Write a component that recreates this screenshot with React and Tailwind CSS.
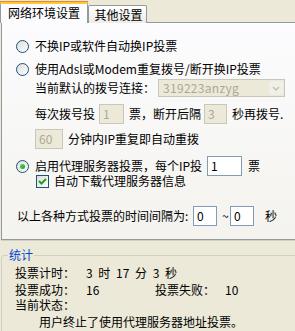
import React from "react";

const font = { fontFamily: '"Noto Sans CJK SC", "Noto Sans", sans-serif' };

function Radio({ checked }) {
  return (
    <span className="relative inline-flex h-[13px] w-[13px] shrink-0 items-center justify-center rounded-full border border-[#1C5180] bg-gradient-to-br from-[#DCDCD7] to-white">
      {checked && (
        <span className="h-[5px] w-[5px] rounded-full bg-gradient-to-br from-[#55D551] to-[#21A121]" />
      )}
    </span>
  );
}

function Checkbox() {
  return (
    <span className="inline-flex h-[13px] w-[13px] shrink-0 items-center justify-center border border-[#1C5180] bg-gradient-to-br from-[#DCDCD7] to-white">
      <svg width="9" height="9" viewBox="0 0 9 9">
        <path d="M1 4 L3.5 6.5 L8 2" stroke="#21A121" strokeWidth="2" fill="none" />
      </svg>
    </span>
  );
}

function Box({ value, width, disabled }) {
  return (
    <span
      className={`inline-flex h-[20px] shrink-0 items-center border pl-[3px] text-[12px] leading-none ${
        disabled
          ? "border-[#C9C7BA] bg-[#ECE9D8] text-[#ACA899]"
          : "border-[#7F9DB9] bg-white text-black"
      } ${width}`}
    >
      {value}
    </span>
  );
}

export default function App() {
  return (
    <div
      className="relative h-[331px] w-[295px] overflow-hidden bg-[#ECE9D8] text-[12px] leading-none text-black"
      style={font}
    >
      {/* tabs */}
      <div className="flex h-[23px] items-end">
        <div className="relative z-10 flex h-[22px] w-[88px] items-center justify-center border-x border-[#919B9C] bg-[#FCFCFE] pb-[1px]">
          <div className="absolute -left-px -right-px top-0 h-[3px] rounded-t-[2px] bg-[#FFC83C] border-t border-[#E68B2C]" />
          <span className="mt-[2px]">网络环境设置</span>
        </div>
        <div className="flex h-[18px] w-[59px] items-center justify-center rounded-t-[2px] border-x border-t border-[#919B9C] bg-gradient-to-b from-white to-[#ECEBE6] pl-[2px]">
          其他设置
        </div>
      </div>

      {/* panel */}
      <div className="-mt-px ml-[1px] h-[218px] w-[300px] border border-[#919B9C] bg-gradient-to-b from-[#FCFCFE] to-[#F4F3EE] shadow-[0_1px_0_#D0CFC4]">
        <div className="mt-[13px] flex h-[20px] items-center gap-[6px] pl-[14px]">
          <Radio />
          <span>不换IP或软件自动换IP投票</span>
        </div>
        <div className="mt-[3px] flex h-[20px] items-center gap-[6px] pl-[14px]">
          <Radio />
          <span>使用Adsl或Modem重复拨号/断开换IP投票</span>
        </div>
        <div className="flex h-[18px] items-center pl-[33px]">
          <span className="w-[123px]">当前默认的拨号连接：</span>
          <span className="flex h-[18px] w-[127px] items-center justify-between border border-[#C9C7BA] bg-[#ECE9D8] pl-[4px] text-[#ACA899]">
            <span className="tracking-[0.3px]">319223anzyg</span>
            <span className="mr-px flex h-[14px] w-[14px] items-center justify-center rounded-[2px] bg-[#F0EFEA]">
              <svg width="8" height="5" viewBox="0 0 8 5">
                <path d="M1 1 L4 4 L7 1" stroke="#C5C2B2" strokeWidth="1.5" fill="none" />
              </svg>
            </span>
          </span>
        </div>
        <div className="mt-[7px] flex h-[20px] items-center pl-[33px]">
          <span className="w-[64px]">每次拨号投</span>
          <Box value="1" width="w-[25px]" disabled />
          <span className="ml-[5px] w-[75px]">票，断开后隔</span>
          <Box value="3" width="w-[23px]" disabled />
          <span className="ml-[5px]">秒再拨号.</span>
        </div>
        <div className="mt-[5px] flex h-[20px] items-center pl-[33px]">
          <Box value="60" width="w-[28px]" disabled />
          <span className="ml-[5px]">分钟内IP重复即自动重拨</span>
        </div>
        <div className="mt-[7px] flex h-[20px] items-center pl-[14px]">
          <Radio checked />
          <span className="ml-[6px] w-[172px]">启用代理服务器投票，每个IP投</span>
          <Box value="1" width="w-[35px]" />
          <span className="ml-[6px]">票</span>
        </div>
        <div className="-mt-[1px] flex h-[12px] items-center pl-[34px]">
          <Checkbox />
          <span className="ml-[5px]">自动下载代理服务器信息</span>
        </div>
        <div className="mt-[19px] flex h-[20px] items-center pl-[15px]">
          <span className="w-[176px]">以上各种方式投票的时间间隔为:</span>
          <Box value="0" width="w-[24px]" />
          <span className="ml-[5px] w-[8px]">~</span>
          <Box value="0" width="w-[24px]" />
          <span className="ml-[11px]">秒</span>
        </div>
      </div>

      {/* stats group */}
      <div className="relative ml-[1px] mt-[15px] h-[90px] w-[300px] rounded-[3px] border border-[#D0D0BF]">
        <span className="absolute -top-[7px] left-[6px] bg-[#ECE9D8] px-[1px] text-[#0046D5]">
          统计
        </span>
        <div className="ml-[13px] mt-[11px] flex h-[12px] items-center">
          <span className="w-[71px]">投票计时：</span>
          <span className="whitespace-pre [word-spacing:3px]">3 时 17 分 3 秒</span>
        </div>
        <div className="ml-[13px] mt-[5px] flex h-[12px] items-center">
          <span className="w-[71px]">投票成功：</span>
          <span className="w-[69px]">16</span>
          <span className="w-[70px]">投票失败：</span>
          <span>10</span>
        </div>
        <div className="ml-[13px] mt-[3px] flex h-[12px] items-center">
          <span>当前状态：</span>
        </div>
        <div className="ml-[37px] mt-[5px] flex h-[12px] items-center">
          <span>用户终止了使用代理服务器地址投票。</span>
        </div>
      </div>
    </div>
  );
}
